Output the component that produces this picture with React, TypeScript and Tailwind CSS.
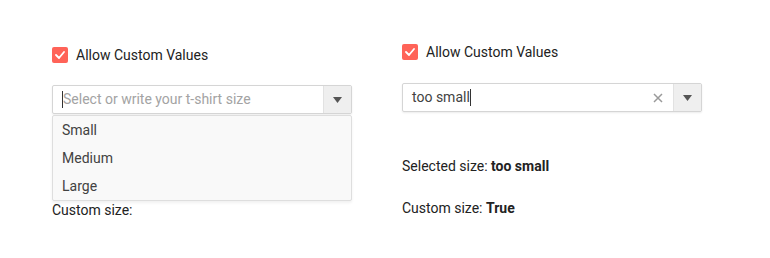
import { useState } from "react";

const sizes = ["Small", "Medium", "Large"];

const CheckIcon = () => (
  <svg width="10" height="8" viewBox="0 0 10 8" fill="none">
    <path d="M1 4l3 3 5-6" stroke="white" strokeWidth="1.8" strokeLinecap="round" strokeLinejoin="round" />
  </svg>
);

const Caret = () => (
  <svg width="9" height="6" viewBox="0 0 9 6">
    <path d="M0 0h9L4.5 6z" fill="#555" />
  </svg>
);

const Checkbox = ({ label }: { label: string }) => (
  <label className="flex items-center gap-[8px] h-[16px]">
    <span className="w-[16px] h-[16px] rounded-[2px] bg-[#ff6358] flex items-center justify-center">
      <CheckIcon />
    </span>
    <span className="text-[14px] text-[#222]">{label}</span>
  </label>
);

const Combo = ({ value, placeholder, open }: { value?: string; placeholder?: string; open?: boolean }) => (
  <div className="relative w-[300px]">
    <div className="flex h-[29px] border border-[#d5d5d5] rounded-[2px] bg-white shadow-[0_1px_2px_rgba(0,0,0,0.08)]">
      <div className="flex-1 flex items-center pl-[9px] text-[14px]">
        {value ? (
          <>
            <span className="text-[#424242]">{value}</span>
            <span className="w-px h-[17px] bg-[#333]" />
          </>
        ) : (
          <>
            <span className="w-px h-[17px] bg-[#333]" />
            <span className="text-[#a3a3a3]">{placeholder}</span>
          </>
        )}
      </div>
      {value && (
        <div className="w-[30px] flex items-center justify-center text-[#999]">
          <svg width="10" height="10" viewBox="0 0 10 10">
            <path d="M1 1l8 8M9 1l-8 8" stroke="#9a9a9a" strokeWidth="1.5" />
          </svg>
        </div>
      )}
      <div className="w-[28px] bg-[#efefef] border-l border-[#e2e2e2] flex items-center justify-center">
        <Caret />
      </div>
    </div>
    {open && (
      <ul className="absolute left-0 top-[30px] w-[300px] bg-[#f9f9f9] border border-[#dedede] rounded-[2px] shadow-[0_2px_3px_rgba(0,0,0,0.06)] z-10">
        {sizes.map((s) => (
          <li key={s} className="h-[28px] flex items-center pl-[9px] text-[14px] text-[#424242]">
            {s}
          </li>
        ))}
      </ul>
    )}
  </div>
);

export default function App() {
  const [open] = useState(true);
  return (
    <div className="w-[770px] h-[258px] bg-white flex gap-[50px] pl-[52px]" style={{ fontFamily: "Roboto, 'Liberation Sans', sans-serif" }}>
      <div className="w-[300px] pt-[47px] flex flex-col">
        <Checkbox label="Allow Custom Values" />
        <div className="mt-[22px]">
          <Combo placeholder="Select or write your t-shirt size" open={open} />
        </div>
        <p className="mt-[44px] text-[14px] text-[#222] leading-[20px]">Selected size:</p>
        <p className="mt-[22px] text-[14px] text-[#222] leading-[20px]">Custom size:</p>
      </div>
      <div className="w-[300px] pt-[44px] flex flex-col">
        <Checkbox label="Allow Custom Values" />
        <div className="mt-[23px]">
          <Combo value="too small" />
        </div>
        <p className="mt-[44px] text-[14px] text-[#222] leading-[20px]">
          Selected size: <b>too small</b>
        </p>
        <p className="mt-[22px] text-[14px] text-[#222] leading-[20px]">
          Custom size: <b>True</b>
        </p>
      </div>
    </div>
  );
}
